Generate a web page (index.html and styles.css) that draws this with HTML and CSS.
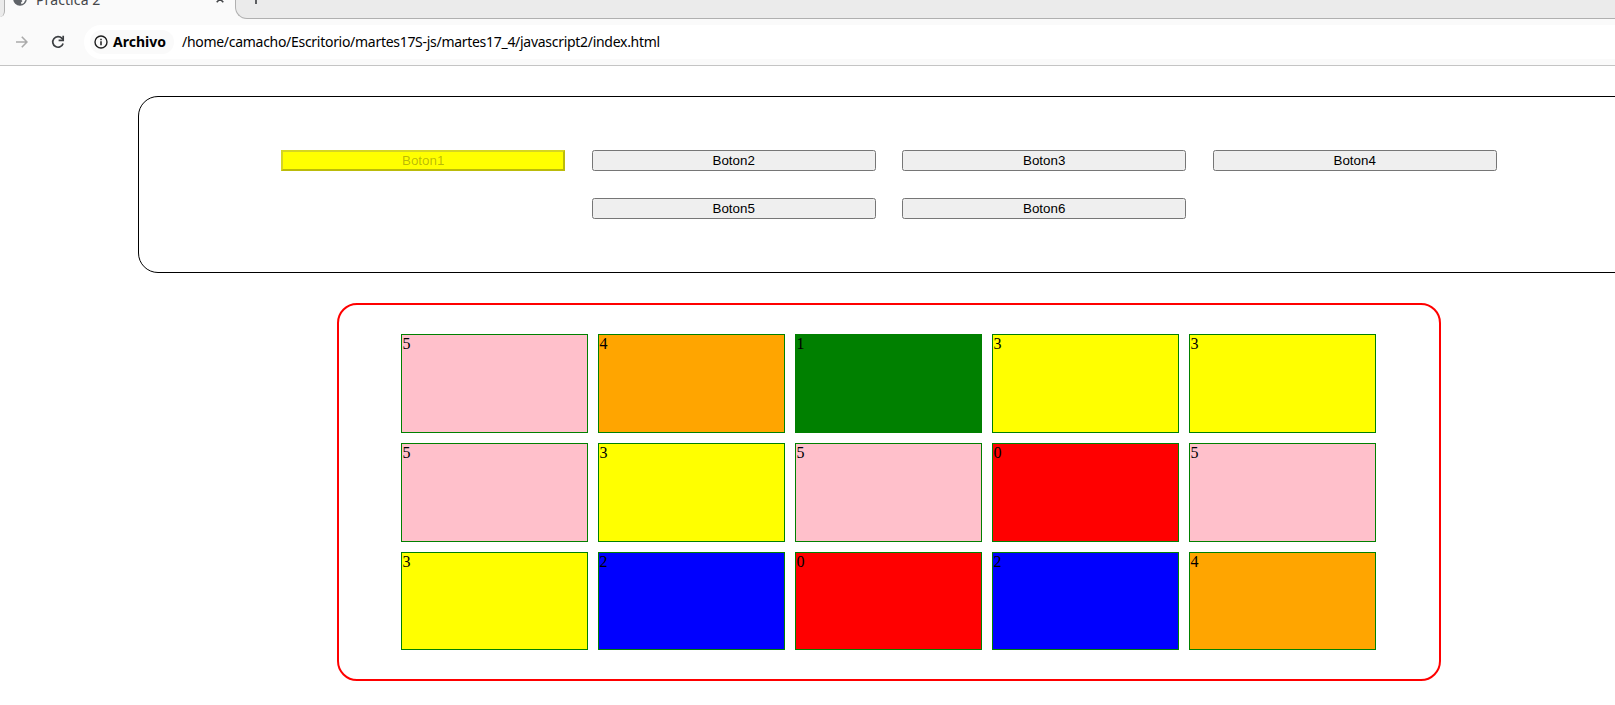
FILE: index.html
```
<!DOCTYPE html>
<html lang="es">
<head>
<meta charset="utf-8">
<title>Practica 2</title>
<link rel="stylesheet" href="styles.css">
</head>
<body>
<header class="browser">
  <div class="tabs">
    <div class="tab-prev"></div>
    <div class="tab">
      <svg class="globe" width="14" height="14" viewBox="0 0 14 14"><circle cx="7" cy="7" r="6.800" fill="#5f6368"/><path d="M7.500 1.500 L12.600 6 L12 9 L9.500 8.500 L8.500 6.500 L6.500 6 L6.500 4.500 L8 3.500 Z" fill="#fafafa"/><path d="M7.500 7 L12.500 6.500 Q12.500 10.500 8.500 12.300 L8 10.500 L9.500 9 Z" fill="#fafafa"/></svg>
      <span class="tab-title">Practica 2</span>
      <svg class="close" width="8" height="8" viewBox="0 0 8 8"><path d="M0.700 0.700 L7.300 7.300 M7.300 0.700 L0.700 7.300" stroke="#45474a" stroke-width="1.600"/></svg>
    </div>
    <div class="tab-rest">
      <svg width="12" height="12" viewBox="0 0 12 12"><path d="M6 0 V12 M0 6 H12" stroke="#45474a" stroke-width="1.700"/></svg>
    </div>
  </div>
  <div class="toolbar">
    <svg class="forward" width="12" height="12" viewBox="0 0 12 12"><path d="M0 6 H11 M5.800 0.700 L11 6 L5.800 11.300" fill="none" stroke="#aaa" stroke-width="1.600"/></svg>
    <svg class="reload" width="14" height="14" viewBox="0 0 14 14"><path d="M12.100 8.500 A5.300 5.300 0 1 1 11 3.400 L12 4.500" fill="none" stroke="#3c3f42" stroke-width="1.700"/><path d="M12.200 0.800 V5.400 H7.600" fill="none" stroke="#3c3f42" stroke-width="1.700"/></svg>
    <div class="omnibox">
      <div class="chip">
        <svg width="14" height="14" viewBox="0 0 14 14"><circle cx="7" cy="7" r="6" fill="none" stroke="#1f1f1f" stroke-width="1.400"/><path d="M7 6.200 V10.300 M7 3.700 V5.200" stroke="#1f1f1f" stroke-width="1.500"/></svg>
        <span class="scheme">Archivo</span>
      </div>
      <span class="url">/home/camacho/Escritorio/martes17S-js/martes17_4/javascript2/index.html</span>
    </div>
  </div>
</header>
<main class="page">
  <section class="buttons">
    <button class="selected" disabled>Boton1</button>
    <button>Boton2</button>
    <button>Boton3</button>
    <button>Boton4</button>
    <button class="second-row">Boton5</button>
    <button>Boton6</button>
  </section>
  <section class="board">
    <div class="cell pink">5</div>
    <div class="cell orange">4</div>
    <div class="cell green">1</div>
    <div class="cell yellow">3</div>
    <div class="cell yellow">3</div>
    <div class="cell pink">5</div>
    <div class="cell yellow">3</div>
    <div class="cell pink">5</div>
    <div class="cell red">0</div>
    <div class="cell pink">5</div>
    <div class="cell yellow">3</div>
    <div class="cell blue">2</div>
    <div class="cell red">0</div>
    <div class="cell blue">2</div>
    <div class="cell orange">4</div>
  </section>
</main>
</body>
</html>
```
FILE: styles.css
```
* { box-sizing: border-box; }
body {
  margin: 0;
  height: 705px;
  overflow: hidden;
  background: #fff;
  color: #000;
  font-family: "Liberation Serif", serif;
  font-size: 16px;
}
svg { display: block; flex: none; }

.browser {
  height: 66px;
  background: #fafafa;
  border-bottom: 1px solid #c4c4c4;
  font-family: "Noto Sans", sans-serif;
  font-size: 14px;
}
.tabs { display: flex; height: 19px; }
.tab-prev {
  width: 5px;
  height: 17px;
  background: #ebebeb;
  border-right: 1px solid #b0b0b0;
  border-bottom-right-radius: 10px 12px;
}
.tab { display: flex; width: 230px; padding-left: 8px; }
.globe { margin-top: -8px; }
.tab-title {
  width: 66px;
  margin: -11px 0 0 9px;
  line-height: 22px;
  letter-spacing: 0.1px;
  color: #45474a;
  white-space: nowrap;
}
.close { margin: -5px 0 0 114px; }
.tab-rest {
  flex: 1;
  height: 19px;
  padding-left: 14px;
  background: #ebebeb;
  border-left: 1px solid #b0b0b0;
  border-bottom: 1px solid #b0b0b0;
  border-bottom-left-radius: 12px;
}
.tab-rest svg { margin-top: -8px; }
.toolbar { display: flex; align-items: center; height: 46px; padding-left: 16px; }
.reload { margin-left: 23px; }
.forward, .reload { margin-top: -1px; }
.omnibox {
  display: flex;
  align-items: center;
  flex: 1;
  height: 34px;
  margin: 0 0 0 19px;
  padding-left: 6px;
  background: #fff;
  border-radius: 17px 0 0 17px;
}
.chip {
  display: flex;
  align-items: center;
  width: 84px;
  height: 24px;
  padding-left: 4px;
  background: #fafafa;
  border-radius: 12px;
}
.scheme { margin-left: 5px; font-weight: 700; line-height: 20px; }
.url { margin-left: 8px; line-height: 20px; letter-spacing: -0.29px; white-space: nowrap; }

.page { width: 1778px; padding-top: 30px; }
.buttons {
  display: grid;
  grid-template-columns: repeat(4, 284px);
  grid-auto-rows: 21px;
  gap: 27px 26.5px;
  width: 1502px;
  height: 177px;
  margin: 0 auto 30px;
  padding: 53px 0 0 142.2px;
  border: 1px solid #000;
  border-radius: 20px;
}
.buttons button {
  margin: 0;
  padding: 1px 6px;
  font: 13.333px "Liberation Sans", Arial, sans-serif;
}
.buttons .selected { background-color: yellow; }
.second-row { grid-column: 2; }

.board {
  display: grid;
  grid-template-columns: repeat(5, 187px);
  grid-template-rows: 99px 99px 98px;
  gap: 10px;
  width: 1104px;
  height: 378px;
  margin: 0 auto;
  padding: 29px 0 0 62.4px;
  border: 2px solid red;
  border-radius: 20px;
}
.cell { border: 1px solid green; line-height: 18px; }
.pink { background: pink; }
.orange { background: orange; }
.green { background: green; }
.yellow { background: yellow; }
.red { background: red; }
.blue { background: blue; }
```
